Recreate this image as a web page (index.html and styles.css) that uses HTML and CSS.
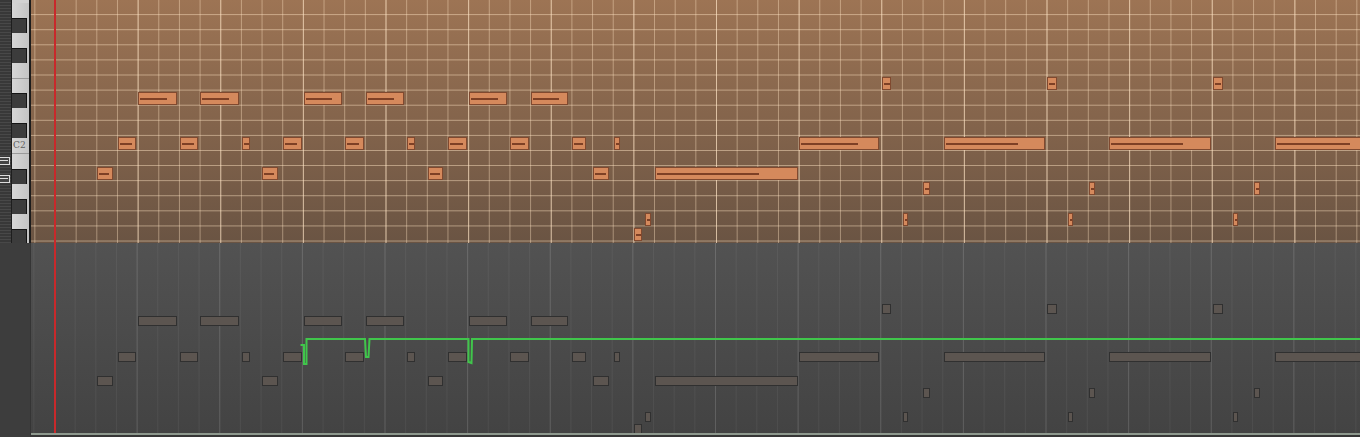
FILE: index.html
```html
<!DOCTYPE html>
<html lang="en">
<head>
    <meta charset="UTF-8">
    <title>Piano Roll</title>
    <link rel="stylesheet" href="styles.css">
</head>
<body>

    <div class="editor">
        <!-- Note grid with keyboard -->
        <div class="roll">
            <div class="keys">
                <div class="key-strip">
                    <span class="strip-btn"></span>
                    <span class="strip-btn"></span>
                </div>
                <div class="keyboard">
                    <div class="key white"></div>
                    <div class="key black"></div>
                    <div class="key white"></div>
                    <div class="key black"></div>
                    <div class="key white"></div>
                    <div class="key white split"></div>
                    <div class="key black"></div>
                    <div class="key white"></div>
                    <div class="key black"></div>
                    <div class="key white"><span class="key-label">C2</span></div>
                    <div class="key white split"></div>
                    <div class="key black"></div>
                    <div class="key white"></div>
                    <div class="key black"></div>
                    <div class="key white"></div>
                    <div class="key black"></div>
                    <div class="key white"></div>
                </div>
            </div>
            <div class="grid" id="grid"></div>
        </div>

        <!-- Controller lane -->
        <div class="lane">
            <div class="lane-side"></div>
            <div class="lane-body">
                <div class="lane-grid" id="lane">
                    <svg class="curve" viewBox="0 0 1329 190" preserveAspectRatio="none">
                        <polyline points="269.5,102 273,102 273,121 275.5,121 275.5,96 334,96 335,114 337.5,114 338.5,96 437.5,96 437.5,119 440.5,120 441,96 1329,96"
                                  fill="none" stroke="#40c64b" stroke-width="2" />
                    </svg>
                </div>
            </div>
        </div>

        <div class="playhead"></div>
    </div>

    <script>
        // grid metrics (px)
        const COL = 20.66;
        const ROW = 15.1;
        const ORIGIN = 24;

        // [column, row, length in columns]
        const notes = [
            [2, 11, 0.75], [10, 11, 0.75], [18, 11, 0.75], [26, 11, 0.8], [29, 11, 6.92],
            [3, 9, 0.9], [6, 9, 0.9], [9, 9, 0.4], [11, 9, 0.9], [14, 9, 0.9],
            [17, 9, 0.4], [19, 9, 0.9], [22, 9, 0.9], [25, 9, 0.65], [27, 9, 0.3],
            [36, 9, 3.87], [43, 9, 4.9], [51, 9, 4.9], [59, 9, 5],
            [4, 6, 1.86], [7, 6, 1.86], [12, 6, 1.86], [15, 6, 1.86], [20, 6, 1.86], [23, 6, 1.8],
            [28, 15, 0.4], [28.5, 14, 0.3], [41, 14, 0.25], [49, 14, 0.25], [57, 14, 0.25],
            [40, 5, 0.45], [48, 5, 0.45], [56, 5, 0.5],
            [42, 12, 0.3], [50, 12, 0.3], [58, 12, 0.3]
        ];

        const grid = document.getElementById("grid");
        const lane = document.getElementById("lane");

        notes.forEach(([col, row, len]) => {
            const left = ORIGIN + col * COL + 0.7;
            const width = len * COL;
            const top = row * ROW + 1.2;

            const note = document.createElement("div");
            note.className = "note";
            note.style.left = left + "px";
            note.style.top = top + "px";
            note.style.width = width + "px";

            const vel = document.createElement("span");
            vel.className = "vel";
            vel.style.width = Math.max(1.5, Math.min(width - 3, width * 0.72 - 1)) + "px";
            note.appendChild(vel);
            grid.appendChild(note);

            // ghost copy in the lane below
            const ghost = document.createElement("div");
            ghost.className = "ghost";
            ghost.style.left = left + "px";
            ghost.style.top = (top * 0.794) + "px";
            ghost.style.width = width + "px";
            lane.appendChild(ghost);
        });
    </script>

</body>
</html>
```

FILE: styles.css
```css
* {
    margin: 0;
    padding: 0;
    box-sizing: border-box;
}

body {
    font-family: "DejaVu Sans", sans-serif;
    background: #3d3d3d;
    width: 1360px;
    height: 437px;
    overflow: hidden;
}

.editor {
    position: relative;
    display: flex;
    flex-direction: column;
    height: 437px;
}

/* Top: keyboard + note grid */
.roll {
    display: flex;
    height: 243px;
}

.keys {
    display: flex;
    width: 31px;
    flex-shrink: 0;
}

.key-strip {
    width: 12px;
    display: flex;
    flex-direction: column;
    gap: 10px;
    padding-top: 157px;
    background: repeating-linear-gradient(#383838 0 2px, #484848 2px 3px);
    border-right: 1px solid #1e1e1e;
}

.strip-btn {
    position: relative;
    width: 10px;
    height: 8px;
    background: #444;
    border: 1px solid #dcdcdc;
    border-left: none;
}

.strip-btn::after {
    content: "";
    position: absolute;
    left: 0;
    right: 1px;
    top: 2px;
    height: 1px;
    background: #dcdcdc;
}

.keyboard {
    width: 19px;
    padding-top: 2.5px;
    overflow: hidden;
    background: #d2d2d2;
    border-right: 2px solid #1c1c1c;
}

.key {
    height: 15.1px;
    position: relative;
}

.key.white {
    background: linear-gradient(to right, #d6d6d6, #c4c4c4);
}

.key.split {
    border-top: 1px solid #9a9a9a;
}

.key.black {
    background: #c4c4c4;
}

.key.black::before {
    content: "";
    position: absolute;
    left: 0;
    top: 0;
    width: 14px;
    height: 15px;
    background: #3c3c3c;
    border: 1px solid #141414;
    border-left: none;
}

.key-label {
    display: block;
    font-family: "DejaVu Serif", serif;
    font-size: 9px;
    line-height: 14px;
    color: #5e5e5e;
    padding-left: 1px;
}

.grid {
    flex: 1;
    position: relative;
    overflow: hidden;
    background:
        linear-gradient(to right, rgba(255, 230, 200, 0.5) 1px, transparent 1px) 24px 0 / 82.64px 100%,
        linear-gradient(to right, rgba(255, 228, 195, 0.42) 1px, transparent 1px) 24px 0 / 20.66px 100%,
        linear-gradient(to bottom, transparent 14px, rgba(255, 228, 195, 0.5) 14px) 0 0 / 100% 15.1px,
        linear-gradient(#9d7454, #6a5443);
}

.note {
    position: absolute;
    height: 13px;
    background: #d5895c;
    border: 1px solid #80492f;
}

.vel {
    position: absolute;
    left: 1px;
    top: 5px;
    height: 2px;
    background: #7e4025;
}

/* Bottom: controller lane */
.lane {
    display: flex;
    height: 194px;
}

.lane-side {
    width: 31px;
    background: #3d3d3d;
    border-right: 1px solid #353535;
}

.lane-body {
    flex: 1;
    display: flex;
    flex-direction: column;
    background: #363636;
}

.lane-grid {
    flex: 1;
    position: relative;
    overflow: hidden;
    margin-bottom: 2px;
    border-bottom: 2px solid #8e998e;
    background:
        linear-gradient(to right, rgba(255, 255, 255, 0.1) 1px, transparent 1px) 23px 0 / 82.64px 100%,
        linear-gradient(to right, rgba(255, 255, 255, 0.05) 1px, transparent 1px) 23px 0 / 20.66px 100%,
        linear-gradient(#525252, #434343);
}

.ghost {
    position: absolute;
    height: 10px;
    background: #5c5550;
    border: 1px solid #303030;
}

.curve {
    position: absolute;
    left: 0;
    top: 0;
    width: 100%;
    height: 100%;
}

.playhead {
    position: absolute;
    left: 54px;
    top: 0;
    width: 2px;
    height: 433px;
    background: #c8292b;
}
```
